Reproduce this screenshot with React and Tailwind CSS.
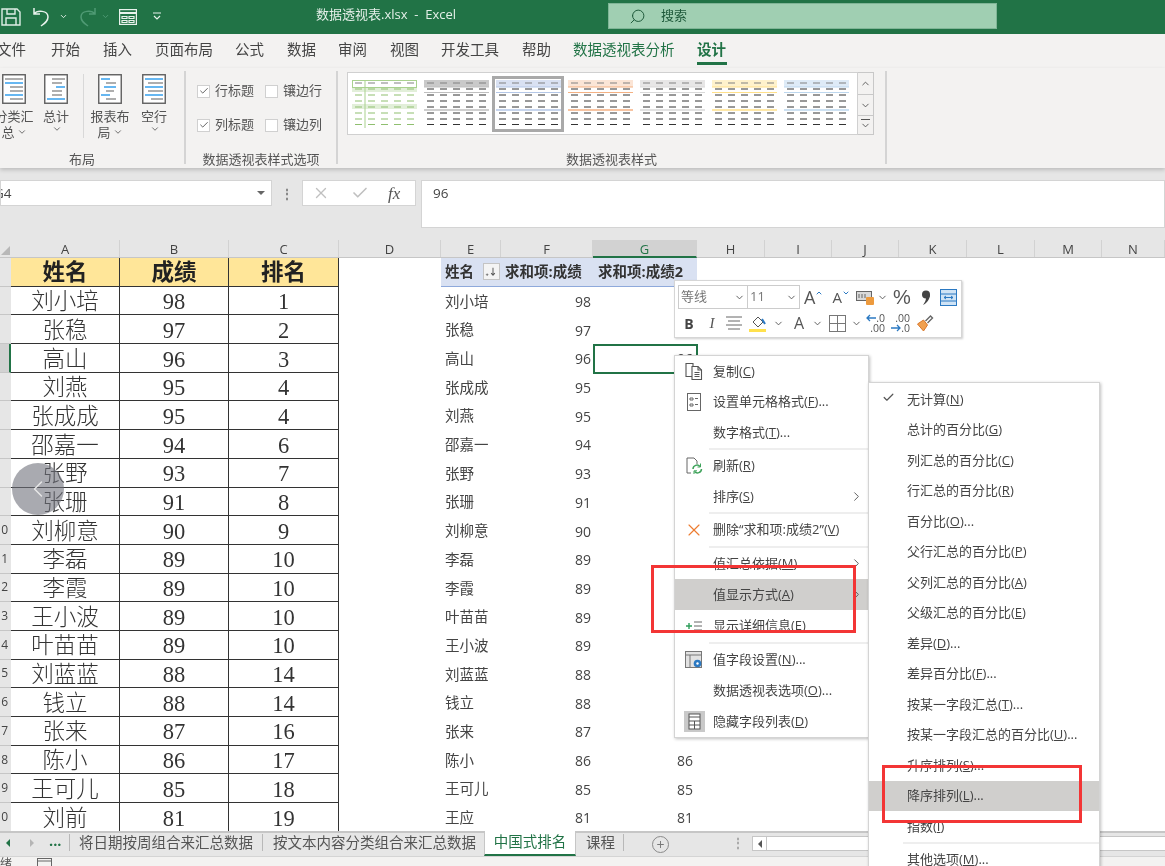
import { ChevronDown, ChevronRight, ChevronUp, ChevronLeft, Search, Check, X } from 'lucide-react';

const PEOPLE = [
  ['刘小培', 98, 1], ['张稳', 97, 2], ['高山', 96, 3], ['刘燕', 95, 4], ['张成成', 95, 4],
  ['邵嘉一', 94, 6], ['张野', 93, 7], ['张珊', 91, 8], ['刘柳意', 90, 9], ['李磊', 89, 10],
  ['李霞', 89, 10], ['王小波', 89, 10], ['叶苗苗', 89, 10], ['刘蓝蓝', 88, 14], ['钱立', 88, 14],
  ['张来', 87, 16], ['陈小', 86, 17], ['王可儿', 85, 18], ['刘前', 81, 19],
];

const PIVOT = [
  ['刘小培', 98], ['张稳', 97], ['高山', 96], ['张成成', 95], ['刘燕', 95], ['邵嘉一', 94], ['张野', 93],
  ['张珊', 91], ['刘柳意', 90], ['李磊', 89], ['李霞', 89], ['叶苗苗', 89], ['王小波', 89], ['刘蓝蓝', 88],
  ['钱立', 88], ['张来', 87], ['陈小', 86], ['王可儿', 85], ['王应', 81],
];

const HEAD_COLS = [
  ['A', 'w-[109px]'], ['B', 'w-[109px]'], ['C', 'w-[110px]'], ['D', 'w-[102px]'], ['E', 'w-[60px]'], ['F', 'w-[92px]'],
  ['G', 'w-[104px]'], ['H', 'w-[68px]'], ['I', 'w-[67px]'], ['J', 'w-[67px]'], ['K', 'w-[68px]'], ['L', 'w-[68px]'],
  ['M', 'w-[67px]'], ['N', 'w-[63px]'],
];

const TABS = [
  ['文件', 'ml-[-3px]'], ['开始', 'ml-[25px]'], ['插入', 'ml-[23px]'], ['页面布局', 'ml-[23px]'], ['公式', 'ml-[22px]'],
  ['数据', 'ml-[23px]'], ['审阅', 'ml-[22px]'], ['视图', 'ml-[23px]'], ['开发工具', 'ml-[22px]'], ['帮助', 'ml-[23px]'],
];

const THUMBS = [
  { line: '#a9d18e', band: '#e2efd9', dash: '#8fbf6f', green: true },
  { line: '#bfbfbf', band: '#c9c9c9', dash: '#333' },
  { line: '#b4c7e7', band: '#d9e1f2', dash: '#333', selected: true },
  { line: '#f4b183', band: '#fbe5d6', dash: '#333' },
  { line: '#d9d9d9', band: '#e7e6e6', dash: '#333' },
  { line: '#ffe08a', band: '#fff2cc', dash: '#333' },
  { line: '#bdd7ee', band: '#deebf7', dash: '#333' },
];

const MAIN_MENU = [
  { pre: '复制(', key: 'C', post: ')', icon: 'copy' },
  { pre: '设置单元格格式(', key: 'F', post: ')...', icon: 'format' },
  { pre: '数字格式(', key: 'T', post: ')...' },
  { sep: true },
  { pre: '刷新(', key: 'R', post: ')', icon: 'refresh' },
  { pre: '排序(', key: 'S', post: ')', arrow: true },
  { sep: true },
  { pre: '删除“求和项:成绩2”(', key: 'V', post: ')', icon: 'delete' },
  { sep: true },
  { pre: '值汇总依据(', key: 'M', post: ')', arrow: true },
  { pre: '值显示方式(', key: 'A', post: ')', arrow: true, active: true },
  { pre: '显示详细信息(', key: 'E', post: ')', icon: 'detail' },
  { sep: true },
  { pre: '值字段设置(', key: 'N', post: ')...', icon: 'field' },
  { pre: '数据透视表选项(', key: 'O', post: ')...' },
  { pre: '隐藏字段列表(', key: 'D', post: ')', icon: 'hide' },
];

const SUB_MENU = [
  { pre: '无计算(', key: 'N', post: ')', checked: true },
  { pre: '总计的百分比(', key: 'G', post: ')' },
  { pre: '列汇总的百分比(', key: 'C', post: ')' },
  { pre: '行汇总的百分比(', key: 'R', post: ')' },
  { pre: '百分比(', key: 'O', post: ')...' },
  { pre: '父行汇总的百分比(', key: 'P', post: ')' },
  { pre: '父列汇总的百分比(', key: 'A', post: ')' },
  { pre: '父级汇总的百分比(', key: 'E', post: ')' },
  { pre: '差异(', key: 'D', post: ')...' },
  { pre: '差异百分比(', key: 'F', post: ')...' },
  { pre: '按某一字段汇总(', key: 'T', post: ')...' },
  { pre: '按某一字段汇总的百分比(', key: 'U', post: ')...' },
  { pre: '升序排列(', key: 'S', post: ')...' },
  { pre: '降序排列(', key: 'L', post: ')...', active: true },
  { pre: '指数(', key: 'I', post: ')' },
  { sep: true },
  { pre: '其他选项(', key: 'M', post: ')...' },
];

function DocIcon({ kind }) {
  const rows = {
    sub: [['#9a9a9a', 3, 21], ['#41a5ee', 3, 21], ['#9a9a9a', 8, 21], ['#9a9a9a', 8, 21], ['#41a5ee', 3, 21], ['#9a9a9a', 8, 21]],
    total: [['#9a9a9a', 8, 21], ['#9a9a9a', 8, 18], ['#41a5ee', 12, 21], ['#9a9a9a', 8, 18], ['#9a9a9a', 8, 18], ['#41a5ee', 3, 21]],
    layout: [['#41a5ee', 3, 12], ['#9a9a9a', 8, 18], ['#41a5ee', 6, 18], ['#9a9a9a', 8, 16], ['#41a5ee', 3, 12], ['#9a9a9a', 8, 18]],
    blank: [['#41a5ee', 3, 21], ['#9a9a9a', 6, 21], ['#41a5ee', 3, 21], ['#9a9a9a', 6, 21], ['#41a5ee', 3, 21], ['#9a9a9a', 9, 21]],
  }[kind];
  return (
    <svg width="24" height="30" viewBox="0 0 24 30" className="shrink-0">
      <rect x="0.75" y="0.75" width="22.5" height="28.5" fill="#fff" stroke="#5f5f5f" strokeWidth="1.4" />
      {rows.map(([color, a, b], i) => (
        <line key={i} x1={a} x2={b} y1={5 + i * 4} y2={5 + i * 4} stroke={color} strokeWidth="1.6" />
      ))}
    </svg>
  );
}

function RibbonButton({ kind, line1, line2, className }) {
  return (
    <div className={`flex flex-col items-center ${className}`}>
      <div className="mt-[6px] mb-[4px]"><DocIcon kind={kind} /></div>
      <div className="text-[13px] leading-[16px] whitespace-nowrap">{line1}</div>
      <div className="flex items-center text-[13px] leading-[16px] whitespace-nowrap">
        {line2}
        <ChevronDown size={10} strokeWidth={2} className="ml-[2px]" />
      </div>
    </div>
  );
}

function OptionCheck({ label, checked }) {
  return (
    <div className="flex items-center h-[16px]">
      <div className="w-[13px] h-[13px] bg-white border border-[#d0d0d0] flex items-center justify-center">
        {checked && <Check size={10} strokeWidth={2} className="text-[#444]" />}
      </div>
      <span className="ml-[5px] text-[13px] text-[#555] whitespace-nowrap">{label}</span>
    </div>
  );
}

function StyleThumb({ line, band, dash, green, selected }) {
  const rows = [3, 9, 15, 21, 27, 33, 39, 44.5];
  const cols = [3, 16, 29, 42, 55];
  return (
    <div className={`w-[72px] h-[56px] flex items-center justify-center ${selected ? 'border-[3px] border-[#a9a9a9] bg-white' : ''}`}>
      <svg width="65" height="48" viewBox="0 0 65 48">
        {green ? (
          <>
            <rect x="0.5" y="0.5" width="64" height="7" fill="none" stroke={line} />
            <rect x="0" y="8" width="65" height="4" fill={band} />
            <rect x="0" y="24" width="65" height="5" fill={band} />
            <line x1="13" x2="13" y1="0" y2="48" stroke={line} />
          </>
        ) : (
          <>
            <rect x="0" y="0" width="65" height="7" fill={band} />
            <line x1="0" x2="65" y1="7" y2="7" stroke={line} />
            <line x1="0" x2="65" y1="12.5" y2="12.5" stroke={line} />
            <line x1="0" x2="65" y1="30" y2="30" stroke={line} strokeWidth="1.5" />
          </>
        )}
        {rows.map((y, i) => cols.map((x) => (
          <line key={`${i}-${x}`} x1={x} x2={x + 7} y1={y} y2={y} stroke={i === 0 ? '#808080' : dash} strokeWidth="1" />
        )))}
      </svg>
    </div>
  );
}

function MenuIcon({ type }) {
  if (type === 'copy') return (
    <svg width="18" height="18" viewBox="0 0 18 18" fill="none" stroke="#555" strokeWidth="1.1">
      <path d="M1 1.5h7v13H1z" /><path d="M7 4.5h6l3.5 3.5v9.5H7z" fill="#fff" /><path d="M13 4.5V8h3.5M9.5 10.5h5M9.5 12.5h5M9.5 14.5h5" />
    </svg>
  );
  if (type === 'format') return (
    <svg width="14" height="18" viewBox="0 0 14 18" fill="none" stroke="#666">
      <rect x="0.5" y="0.5" width="13" height="17" /><path d="M3 5h3v2H3zM8 5.5h3M3 11h3v2H3zM8 11.5h3" />
    </svg>
  );
  if (type === 'refresh') return (
    <svg width="17" height="18" viewBox="0 0 17 18" fill="none">
      <path d="M1 1h7l3 3v3M1 1v15h4" stroke="#666" />
      <path d="M7 12a4 4 0 0 1 7-2.5M15.5 12a4 4 0 0 1-7 2.5" stroke="#3fa35b" strokeWidth="1.5" />
      <path d="M14.5 6.5v3.5h-3M8 17v-3.2h3" stroke="#3fa35b" />
    </svg>
  );
  if (type === 'delete') return <X size={20} strokeWidth={1.4} className="text-[#ed7d31]" />;
  if (type === 'detail') return (
    <svg width="17" height="10" viewBox="0 0 17 10" fill="none">
      <path d="M0 5h6M3 2v6" stroke="#2e9e5b" strokeWidth="1.4" /><path d="M8 1h8M8 5h8M8 9h8" stroke="#666" />
    </svg>
  );
  if (type === 'field') return (
    <svg width="18" height="18" viewBox="0 0 18 18" fill="none">
      <rect x="0.5" y="0.5" width="16" height="16" fill="#e2e2e2" stroke="#777" /><path d="M1 4h15M5 4v12" stroke="#777" />
      <circle cx="12.5" cy="12.5" r="3.8" fill="#2b79c2" /><circle cx="12.5" cy="12.5" r="1.2" fill="#fff" />
    </svg>
  );
  if (type === 'hide') return (
    <svg width="21" height="21" viewBox="0 0 21 21" fill="none">
      <rect width="21" height="21" fill="#c9c9c9" /><rect x="5" y="3" width="11" height="15" fill="#fff" stroke="#555" />
      <path d="M5 6h11M5 10h11M5 14h11M10.5 10v8" stroke="#555" />
    </svg>
  );
  return null;
}

function MenuLabel({ item }) {
  return (
    <span className="text-[13px] text-[#444] whitespace-nowrap">
      {item.pre}<u>{item.key}</u>{item.post}
    </span>
  );
}

function ContextMenu() {
  return (
    <div className="absolute left-[674px] top-[355px] w-[195px] bg-white border border-[#d4d4d4] shadow-[1px_1px_3px_rgba(0,0,0,0.25)]">
      {MAIN_MENU.map((item, i) => item.sep ? (
        <div key={i} className="h-[3px] ml-[34px] flex items-center"><div className="h-[2px] w-full bg-[#eeeeee]" /></div>
      ) : (
        <div key={i} className={`flex items-center ${i > 8 ? 'h-[31px]' : 'h-[30.5px]'} ${item.active ? 'bg-[#d0cfcd]' : ''}`}>
          <div className="w-[38px] flex justify-center shrink-0"><MenuIcon type={item.icon} /></div>
          <MenuLabel item={item} />
          {item.arrow && <ChevronRight size={15} strokeWidth={1.5} className="ml-auto mr-[4px] text-[#555]" />}
        </div>
      ))}
    </div>
  );
}

function SubMenu() {
  return (
    <div className="absolute left-[868px] top-[382px] w-[232px] h-[500px] bg-white border border-[#d4d4d4] shadow-[1px_1px_3px_rgba(0,0,0,0.25)] pt-px">
      {SUB_MENU.map((item, i) => item.sep ? (
        <div key={i} className="h-[3px] ml-[34px] flex items-center"><div className="h-[2px] w-full bg-[#eeeeee]" /></div>
      ) : (
        <div key={i} className={`h-[30.5px] flex items-center ${item.active ? 'bg-[#d0cfcd]' : ''}`}>
          <div className="w-[38px] flex justify-center shrink-0">
            {item.checked && <Check size={13} strokeWidth={2.2} className="text-[#555] mb-[3px]" />}
          </div>
          <MenuLabel item={item} />
        </div>
      ))}
    </div>
  );
}

function MiniToolbar() {
  const small = <ChevronDown size={11} strokeWidth={2} className="text-[#555]" />;
  const arrow = (dir) => (
    <svg width="10" height="8" viewBox="0 0 10 8" fill="none" stroke="#2b79c2" strokeWidth="1.3" className="shrink-0">
      <path d={dir === 'left' ? 'M10 4H1M4 1L1 4l3 3' : 'M0 4h9M6 1l3 3-3 3'} />
    </svg>
  );
  return (
    <div className="absolute left-[674px] top-[280px] w-[288px] h-[58px] bg-white border border-[#d6d6d6] shadow-[1px_1px_2px_rgba(0,0,0,0.2)] text-[#555]">
      <div className="flex items-center h-[24px] mt-[4px] ml-[3px] [&>*]:shrink-0">
        <div className="w-[70px] h-[24px] border border-[#ccc] flex items-center justify-between px-[2px] text-[13px] text-[#777]">等线{small}</div>
        <div className="w-[52px] h-[24px] border border-l-0 border-[#ccc] flex items-center justify-between px-[2px] text-[13px] text-[#777]">11{small}</div>
        <span className="ml-[4px] text-[18px] leading-none">A</span>
        <ChevronUp size={8} strokeWidth={3} className="mb-[8px] text-[#2b79c2]" />
        <span className="ml-[9px] text-[15px] leading-none">A</span>
        <ChevronDown size={8} strokeWidth={3} className="mb-[8px] text-[#2b79c2]" />
        <svg width="18" height="16" viewBox="0 0 18 16" className="ml-[6px]" fill="none">
          <rect x="0.5" y="2.5" width="15" height="9" fill="#d9d9d9" stroke="#666" /><path d="M3 5v4M6 5v4M9 5v4" stroke="#666" /><rect x="10" y="8" width="8" height="8" rx="1" fill="#ed9a3d" />
        </svg>
        <span className="ml-[3px]">{small}</span>
        <span className="ml-[3px] w-[22px] text-center text-[20px] leading-none font-['Liberation_Sans',sans-serif]">%</span>
        <svg width="10" height="15" viewBox="0 0 10 15" className="ml-[8px]">
          <circle cx="5" cy="4.5" r="4" fill="#444" /><path d="M9 4.5C9 9 6 13 2 15c2-3 3-5 3-7z" fill="#444" />
        </svg>
        <svg width="17" height="17" viewBox="0 0 17 17" className="ml-[9px]" fill="none">
          <rect x="0.5" y="0.5" width="16" height="16" fill="#cfe3f5" stroke="#2b79c2" /><path d="M1 5h15M1 12h15M4 8.5h9M4 8.5l2-1.5M4 8.5l2 1.5M13 8.5l-2-1.5M13 8.5l-2 1.5" stroke="#2b79c2" />
        </svg>
      </div>
      <div className="flex items-center h-[24px] mt-[2px] ml-[9px] [&>*]:shrink-0">
        <span className="w-[10px] text-[14px] font-bold text-center text-[#444]">B</span>
        <span className="ml-[13px] w-[10px] text-[15px] italic text-center font-['Liberation_Serif',serif]">I</span>
        <svg width="16" height="15" viewBox="0 0 16 15" className="ml-[9px]" stroke="#666"><path d="M0 1h16M2 5h12M0 9h16M2 13h12" /></svg>
        <svg width="18" height="18" viewBox="0 0 18 18" className="ml-[7px]" fill="none">
          <path d="M4 8l5-5 5 5-5 5z" stroke="#555" /><path d="M13 5l3 5" stroke="#2b79c2" strokeWidth="2" /><rect x="0" y="15" width="17" height="3" fill="#ffe14d" />
        </svg>
        <span className="ml-[6px]">{small}</span>
        <span className="ml-[10px] text-[16px] leading-none">A</span>
        <span className="ml-[8px]">{small}</span>
        <svg width="17" height="17" viewBox="0 0 17 17" className="ml-[6px]" fill="none" stroke="#777"><rect x="0.5" y="0.5" width="16" height="16" /><path d="M8.5 0v17M0 8.5h17" /></svg>
        <span className="ml-[5px]">{small}</span>
        <div className="ml-[4px] w-[19px] text-[10.5px] leading-[10px] text-right">
          <div className="flex items-center justify-end">{arrow('left')}<span>.0</span></div>
          <div>.00</div>
        </div>
        <div className="ml-[6px] w-[19px] text-[10.5px] leading-[10px] text-right">
          <div>.00</div>
          <div className="flex items-center justify-end">{arrow('right')}<span>.0</span></div>
        </div>
        <svg width="19" height="18" viewBox="0 0 18 18" className="ml-[5px]" fill="none">
          <path d="M2 10l6-4 4 5-4 6z" fill="#f0a050" stroke="#d9772a" /><path d="M10 7l5-5 2 2-5 5" stroke="#666" strokeWidth="1.4" />
        </svg>
      </div>
    </div>
  );
}

function SheetRow({ index }) {
  const person = PEOPLE[index - 1];
  const pivot = PIVOT[index - 1];
  const rowNo = index + 1;
  const isHeader = index === 0;
  const leftCell = `border-r border-b border-[#333] flex items-center justify-center pt-[3px] font-['Liberation_Serif','Noto_Sans_CJK_SC',serif] text-[22.5px] ${isHeader ? 'font-bold bg-[#ffe699] text-[#222]' : 'font-light bg-white text-[#333]'}`;
  const labels = isHeader ? ['姓名', '成绩', '排名'] : person;
  return (
    <div className="flex h-[28.7px] shrink-0">
      <div className={`w-[11px] shrink-0 border-b border-[#c6c6c6] flex items-center justify-end overflow-hidden text-[12px] pr-[3px] text-[#444] ${rowNo === 4 ? 'bg-[#d2d2d2] border-r-2 border-r-[#217346]' : 'bg-[#e6e6e6]'}`}>
        {rowNo >= 10 ? String(rowNo % 10) : ''}
      </div>
      {labels.map((text, i) => (
        <div key={i} className={`${leftCell} ${i === 2 ? 'w-[110px]' : 'w-[109px]'}`}>{text}</div>
      ))}
      <div className="w-[102px]" />
      {isHeader ? (
        <div className="w-[256px] flex items-center bg-[#d9e1f2] border-b border-[#8ea9db] text-[14.5px] font-bold text-[#333]">
          <span className="w-[42px] pl-[4px]">姓名</span>
          <span className="w-[17px] h-[17px] bg-[#f4f4f4] border border-[#c4c4c4] flex items-end justify-center text-[#555] text-[9px] leading-[14px]">₊↓</span>
          <span className="ml-[5px] w-[93px] whitespace-nowrap">求和项:成绩</span>
          <span className="whitespace-nowrap">求和项:成绩2</span>
        </div>
      ) : (
        <div className="flex w-[256px] items-center text-[#444] pt-[1px]">
          <span className="w-[60px] pl-[4px] text-[14.5px]">{pivot[0]}</span>
          <span className="w-[90px] text-right text-[14px]">{pivot[1]}</span>
          <span className="w-[102px] text-right text-[14px]">{pivot[1]}</span>
        </div>
      )}
    </div>
  );
}

export default function App() {
  return (
    <div className="relative w-[1165px] h-[866px] overflow-hidden bg-white blur-[0.35px] font-['Open_Sans','Noto_Sans_CJK_SC',sans-serif] text-[#444]">
      {/* title bar */}
      <div className="flex h-[34px] bg-[#217346] text-[#e3efe8]">
        <div className="w-[316px] flex items-center pb-[1px]">
          <svg width="20" height="18" viewBox="0 0 20 18" fill="none" stroke="#dfeee6" strokeWidth="1.4" className="ml-[1px]">
            <path d="M1 1h15l3 3v13H1zM6 1v5h8V1M5 17v-7h10v7" />
          </svg>
          <svg width="17" height="20" viewBox="0 0 17 20" fill="none" stroke="#e8f2ec" strokeWidth="1.5" className="ml-[12px]">
            <path d="M1 1v6h6M1 7c3-4 14-4 14 3 0 4-3 6-7 9" />
          </svg>
          <ChevronDown size={9} strokeWidth={2.5} className="ml-[9px]" />
          <svg width="17" height="20" viewBox="0 0 17 20" fill="none" stroke="#4f9a74" strokeWidth="1.5" className="ml-[11px]">
            <path d="M16 1v6h-6M16 7C13 3 2 3 2 10c0 4 3 6 7 9" />
          </svg>
          <ChevronDown size={9} strokeWidth={2.5} className="ml-[5px] text-[#4f9a74]" />
          <svg width="18" height="16" viewBox="0 0 18 16" fill="none" stroke="#e8f2ec" strokeWidth="1.2" className="ml-[9px]">
            <rect x="0.6" y="0.6" width="16.8" height="14.8" /><path d="M1 4h16" strokeWidth="2" /><path d="M3 7.5h5v2H3zM10 7.5h5v2h-5zM3 11.5h5v2H3zM10 11.5h5v2h-5z" />
          </svg>
          <svg width="10" height="9" viewBox="0 0 10 9" fill="none" stroke="#e8f2ec" className="ml-[15px]">
            <path d="M1 1h8M2 4l3 3 3-3" strokeWidth="1.2" />
          </svg>
        </div>
        <div className="w-[292px] text-[13px] leading-[28px] whitespace-pre">数据透视表.xlsx  -  Excel</div>
        <div className="w-[389px] h-[26px] mt-[3px] bg-[#a0cfb2] border border-[#7fb596] flex items-center text-[#1f5a3b]">
          <Search size={17} strokeWidth={1.4} className="ml-[20px] -scale-x-100" />
          <span className="ml-[15px] text-[13px]">搜索</span>
        </div>
      </div>

      {/* ribbon tabs */}
      <div className="flex items-start h-[34px] bg-[#f3f2f1] text-[14.5px] leading-[32px] text-[#444]">
        {TABS.map(([label, margin]) => <span key={label} className={`${margin} whitespace-nowrap`}>{label}</span>)}
        <span className="ml-[22px] whitespace-nowrap text-[#217346]">数据透视表分析</span>
        <span className="ml-[22px] h-[31px] border-b-[3px] border-[#217346] px-[0.5px] font-bold text-[#217346]">设计</span>
      </div>

      {/* ribbon body */}
      <div className="relative flex h-[100px] bg-[#f3f2f1] shadow-[0_2px_4px_rgba(0,0,0,0.18)] text-[#555]">
        <div className="w-[192px] ml-[-8px] shrink-0 flex flex-col">
          <div className="flex h-[83px]">
            <RibbonButton kind="sub" line1="分类汇" line2="总" className="w-[44px]" />
            <RibbonButton kind="total" line1="总计" line2="" className="w-[32px] ml-[4px]" />
            <div className="w-px h-[64px] mt-[6px] ml-[11px] bg-[#d8d8d8]" />
            <RibbonButton kind="layout" line1="报表布" line2="局" className="w-[44px] ml-[4px]" />
            <RibbonButton kind="blank" line1="空行" line2="" className="w-[32px] ml-[6px]" />
          </div>
          <div className="pr-[12px] text-center text-[13px] leading-[18px]">布局</div>
        </div>
        <div className="w-[2px] h-[93px] mt-[3px] bg-[#d4d4d4] shrink-0" />
        <div className="w-[150px] shrink-0 flex flex-col">
          <div className="h-[83px] pl-[11px] pt-[15px] flex flex-col gap-[18px]">
            <div className="flex gap-[11px]"><OptionCheck label="行标题" checked /><OptionCheck label="镶边行" /></div>
            <div className="flex gap-[11px]"><OptionCheck label="列标题" checked /><OptionCheck label="镶边列" /></div>
          </div>
          <div className="text-center text-[13px] leading-[18px] whitespace-nowrap">数据透视表样式选项</div>
        </div>
        <div className="w-[2px] h-[93px] mt-[3px] bg-[#d4d4d4] shrink-0" />
        <div className="w-[547px] shrink-0 flex flex-col">
          <div className="h-[83px] pl-[9px] pt-[4px] flex">
            <div className="w-[511px] h-[63px] bg-white border border-[#d0d0d0] flex items-center">
              {THUMBS.map((thumb, i) => <StyleThumb key={i} {...thumb} />)}
            </div>
            <div className="w-[16px] h-[63px] flex flex-col bg-[#f3f2f1] border border-l-0 border-[#c8c8c8] text-[#555]">
              <div className="h-[22px] flex items-center justify-center border-b border-[#c8c8c8]"><ChevronUp size={11} strokeWidth={2} /></div>
              <div className="h-[21px] flex items-center justify-center border-b border-[#c8c8c8]"><ChevronDown size={11} strokeWidth={2} /></div>
              <div className="flex-1 flex flex-col items-center justify-center">
                <div className="w-[9px] h-px bg-[#555]" />
                <ChevronDown size={11} strokeWidth={2} />
              </div>
            </div>
          </div>
          <div className="text-center text-[13px] leading-[18px]">数据透视表样式</div>
        </div>
        <div className="w-[2px] h-[93px] mt-[3px] bg-[#d4d4d4] shrink-0" />
      </div>

      {/* formula bar */}
      <div className="flex h-[72px] bg-[#e6e6e6] pt-[12px]">
        <div className="w-[272px] h-[26px] bg-white border border-[#d4d4d4] flex items-center justify-between pr-[6px] overflow-hidden text-[13.5px]">
          <span className="ml-[-7px]">G4</span>
          <span className="w-0 h-0 border-x-[4px] border-x-transparent border-t-[4px] border-t-[#666]" />
        </div>
        <div className="w-[30px] h-[26px] flex items-center justify-center text-[#8a8a8a] text-[14px] font-bold">⋮</div>
        <div className="w-[114px] h-[26px] bg-white border border-[#d4d4d4] flex items-center text-[#c0c0c0]">
          <X size={18} strokeWidth={1.8} className="ml-[9px]" />
          <Check size={18} strokeWidth={2.2} className="ml-[21px]" />
          <span className="ml-[19px] text-[17px] leading-none italic text-[#555] font-['Liberation_Serif',serif]">fx</span>
        </div>
        <div className="w-[744px] h-[48px] ml-[5px] bg-white border border-[#d4d4d4] pl-[11px] text-[13.5px] leading-[25px]">96</div>
      </div>

      {/* column header */}
      <div className="flex h-[18px] bg-[#e6e6e6] border-b border-[#c6c6c6] text-[13px] leading-[18px] text-[#444]">
        <div className="w-[11px] flex items-end justify-end"><span className="w-0 h-0 border-l-[9px] border-l-transparent border-b-[9px] border-b-[#b8b8b8] mb-[2px] mr-[1px]" /></div>
        {HEAD_COLS.map(([name, width]) => (
          <div key={name} className={`${width} text-center border-r border-[#d2d2d2] ${name === 'G' ? 'bg-[#d2d2d2] text-[#217346] border-b-2 border-b-[#217346] h-[18px]' : ''}`}>{name}</div>
        ))}
      </div>

      {/* sheet */}
      <div className="relative flex flex-col h-[573px] overflow-hidden bg-white">
        {Array.from({ length: 20 }, (_, i) => <SheetRow key={i} index={i} />)}
      </div>

      {/* sheet tabs */}
      <div className="relative flex items-stretch h-[25px] bg-[#e6e6e6] border-t-2 border-[#c6c6c6] text-[14.5px] text-[#555]">
        <div className="w-[70px] flex items-center border-r border-[#b8b8b8] mt-[1px] mb-[5px]">
          <span className="ml-[6px] w-0 h-0 border-y-[4px] border-y-transparent border-r-[4px] border-r-[#217346]" />
          <span className="ml-[20px] w-0 h-0 border-y-[4px] border-y-transparent border-l-[4px] border-l-[#b5b5b5]" />
          <span className="ml-[15px] font-bold text-[#217346] leading-none mb-[2px]">...</span>
        </div>
        <div className="w-[192px] flex items-center pl-[9px] pb-[4px] whitespace-nowrap">将日期按周组合来汇总数据</div>
        <div className="w-[222px] flex items-center pl-[10px] whitespace-nowrap border-l border-[#b8b8b8] mt-[1px] mb-[5px]">按文本内容分类组合来汇总数据</div>
        <div className="w-[92px] flex items-center justify-center pb-[2px] bg-white text-[#217346] border-b-2 border-[#217346] border-x border-x-[#c6c6c6] mt-[-2px]">中国式排名</div>
        <div className="w-[48px] flex items-center pl-[10px] border-r border-[#b8b8b8] mt-[1px] mb-[5px]">课程</div>
        <div className="w-[17px] h-[17px] ml-[28px] mt-[3px] rounded-full border border-[#8a8a8a] flex items-center justify-center text-[14px] leading-none text-[#777]">+</div>
        <div className="ml-[61px] w-[15px] flex items-center justify-center pb-[4px] text-[#aaa] text-[14px] font-bold">⋮</div>
        <div className="w-[15px] h-[15px] mt-[3px] ml-[7px] bg-white border border-[#c6c6c6] flex items-center justify-center">
          <span className="w-0 h-0 border-y-[4px] border-y-transparent border-r-[4px] border-r-[#555]" />
        </div>
        <div className="flex-1 h-[15px] mt-[3px] bg-white border-y border-[#c6c6c6]" />
      </div>

      {/* status bar */}
      <div className="flex h-[10px] overflow-hidden bg-[#f3f2f1] text-[12px] text-[#555] border-t border-[#d4d4d4]">
        <span className="ml-[-12px] leading-[14px]">就绪</span>
        <svg width="15" height="12" viewBox="0 0 15 12" fill="none" stroke="#666" className="ml-[25px] mt-[1px]"><rect x="0.5" y="0.5" width="14" height="11" /><path d="M0 3h15" /></svg>
      </div>

      {/* selected cell */}
      <div className="absolute left-[593px] top-[344px] w-[105px] h-[30px] border-2 border-[#217346]" />

      {/* back button from the page around the shot */}
      <div className="absolute left-[12px] top-[463px] w-[52px] h-[52px] rounded-full bg-[#70727c]/60 flex items-center justify-center">
        <ChevronLeft size={28} strokeWidth={1.2} className="text-[#e8e8e8]" />
      </div>

      <MiniToolbar />
      <ContextMenu />
      <SubMenu />

      {/* red annotations */}
      <div className="absolute left-[651px] top-[565px] w-[205px] h-[68px] border-[3px] border-[#f33535]" />
      <div className="absolute left-[882px] top-[765px] w-[200px] h-[58px] border-[3px] border-[#f33535]" />
    </div>
  );
}
